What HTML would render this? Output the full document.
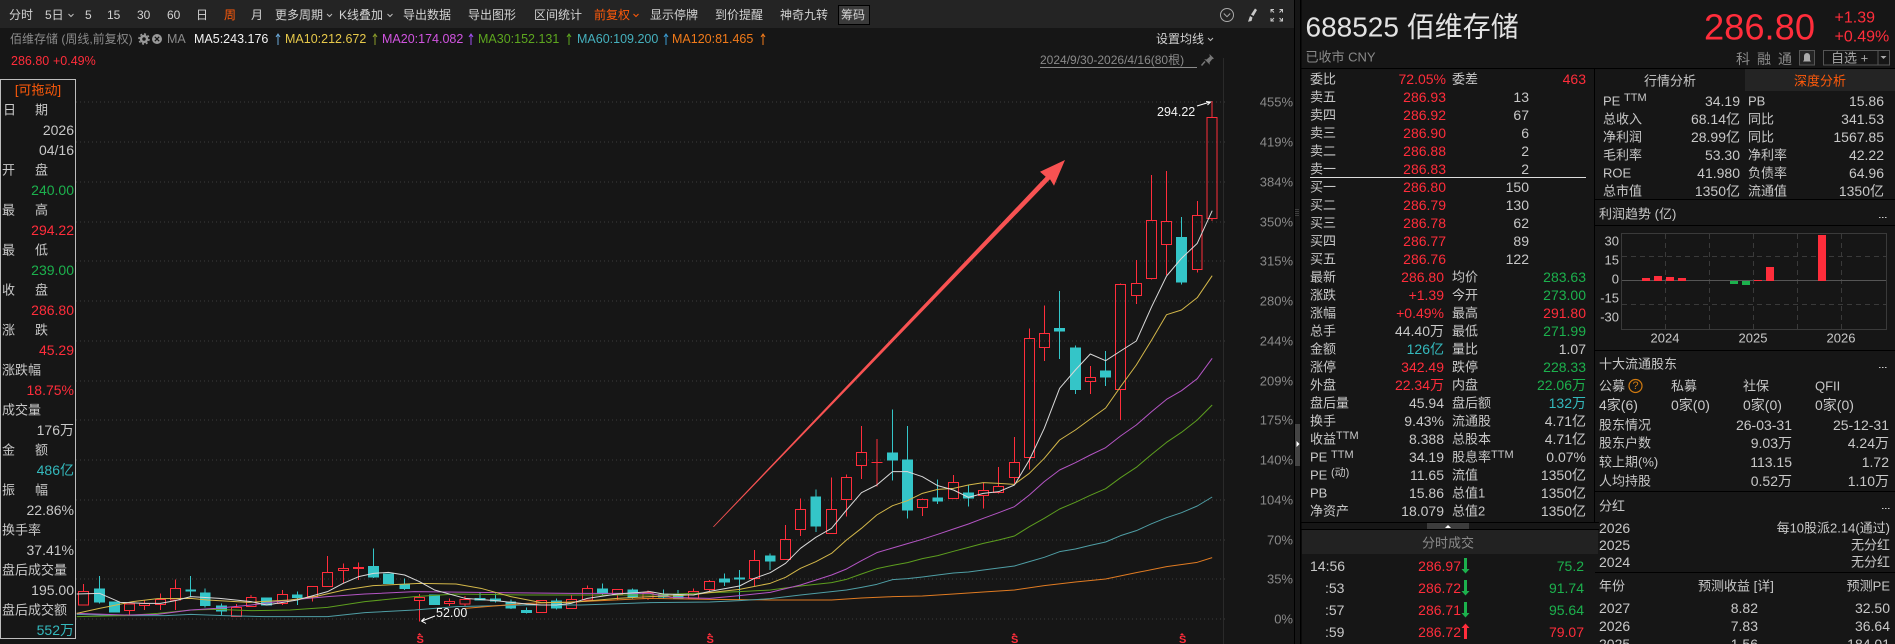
<!DOCTYPE html>
<html lang="zh-CN"><head><meta charset="utf-8"><title>688525 佰维存储</title>
<style>
html,body{margin:0;padding:0;background:#161616;width:1895px;height:644px;overflow:hidden}
svg{display:block;position:absolute;left:0;top:0}
text{font-family:"Liberation Sans","Noto Sans CJK SC",sans-serif;dominant-baseline:central;fill:#c8c8c8;font-size:14px}
.t{font-size:12px;fill:#d2d2d2}
.m{font-size:12.5px}
.l{font-size:13px}
.s{font-size:11px}
.e{text-anchor:end}
.mid{text-anchor:middle}
.r{fill:#ff2d3b}
.g{fill:#1cb14d}
.c{fill:#34b9bd}
.o{fill:#ff5a0a}
.y{fill:#8a8a8a}
.w{fill:#f2f2f2}
.ns *{vector-effect:non-scaling-stroke}
.ma{fill:none;stroke-width:1;stroke-linejoin:round}
.cr{shape-rendering:crispEdges}
</style></head><body>
<svg width="1895" height="644" viewBox="0 0 1895 644" xmlns="http://www.w3.org/2000/svg">
<rect width="1895" height="644" fill="#161616"/>
<!-- toolbar -->
<rect width="1294" height="28" fill="#242424"/>
<rect x="1294" width="1" height="644" fill="#000"/>
<rect x="1300" width="1.5" height="644" fill="#000"/>
<g class="t">
<text class="t" x="9" y="15">分时</text><text class="t" x="45" y="15">5日</text>
<text class="t" x="85" y="15">5</text><text class="t" x="107" y="15">15</text><text class="t" x="137" y="15">30</text><text class="t" x="167" y="15">60</text>
<text class="t" x="196" y="15">日</text><text class="t o" x="224" y="15">周</text><text class="t" x="251" y="15">月</text>
<text class="t" x="275" y="15">更多周期</text><text class="t" x="339" y="15">K线叠加</text><text class="t" x="403" y="15">导出数据</text><text class="t" x="468" y="15">导出图形</text><text class="t" x="534" y="15">区间统计</text>
<text class="t o" x="594" y="15">前复权</text><text class="t" x="650" y="15">显示停牌</text><text class="t" x="715" y="15">到价提醒</text><text class="t" x="780" y="15">神奇九转</text>
</g>
<rect x="838.5" y="5.5" width="31" height="19" fill="#3a3a3a" stroke="#000"/>
<text class="t" x="841" y="15">筹码</text>
<path d="M68.5 14l2.500 2.500 2.500-2.500M327 14l2.500 2.500 2.500-2.500M387.500 14l2.500 2.500 2.500-2.500" fill="none" stroke="#bbb"/>
<path d="M633.500 14l2.500 2.500 2.500-2.500" fill="none" stroke="#ff5a0a"/>
<circle cx="1227" cy="15" r="6.500" fill="none" stroke="#aaa"/><path d="M1223.800 13.500l3.200 3.200 3.200-3.200" fill="none" stroke="#aaa"/>
<path d="M1255 8.500l2 1.500-3.500 6-2.500-1.500zM1250 16l2.500 1.500-1 3.500-3.500.8z" fill="#c8c8c8"/>
<path d="M1271 12.500v-3h3M1279.500 9.500h3v3M1271 18v3h3M1279.500 21h3v-3M1271.500 10l2.500 2.500M1282 10l-2.500 2.500M1271.500 20.500l2.500-2.500M1282 20.500l-2.500-2.500" fill="none" stroke="#c8c8c8"/>
<!-- row 2 -->
<text class="t y" x="10" y="39">佰维存储 (周线,前复权)</text>
<circle cx="144" cy="39" r="3" fill="none" stroke="#999" stroke-width="2.500"/><circle cx="144" cy="39" r="5" fill="none" stroke="#999" stroke-width="1.500" stroke-dasharray="2 1.900"/>
<circle cx="157" cy="39" r="5" fill="#999"/><path d="M154.800 36.800l4.400 4.400M159.200 36.800l-4.400 4.400" stroke="#161616" stroke-width="1.300"/>
<text class="m y" x="167" y="39">MA</text>
<text class="m w" x="194" y="39">MA5:243.176</text>
<text class="m" x="285" y="39" style="fill:#e6c84a">MA10:212.672</text>
<text class="m" x="382" y="39" style="fill:#d154e0">MA20:174.082</text>
<text class="m" x="478" y="39" style="fill:#5da61f">MA30:152.131</text>
<text class="m" x="577" y="39" style="fill:#45b0bd">MA60:109.200</text>
<text class="m" x="672" y="39" style="fill:#f07a1a">MA120:81.465</text>
<g fill="none" stroke-width="1">
<path d="M278 45V34M276 37l2-3 2 3" stroke="#6aa8d8"/><path d="M375 45V34M373 37l2-3 2 3" stroke="#8a9a2a"/><path d="M471 45V34M469 37l2-3 2 3" stroke="#a050f0"/><path d="M569 45V34M567 37l2-3 2 3" stroke="#5da61f"/><path d="M666 45V34M664 37l2-3 2 3" stroke="#3a9ad0"/><path d="M763 45V34M761 37l2-3 2 3" stroke="#f07a1a"/>
</g>
<text class="t" x="1156" y="39">设置均线</text><path d="M1208 38l2.500 2.500 2.500-2.500" fill="none" stroke="#bbb"/>
<text class="m r" x="11" y="61">286.80</text><text class="m r" x="53" y="61">+0.49%</text>
<text class="t y" x="1040" y="60">2024/9/30-2026/4/16(80根)</text>
<rect x="1040" y="67" width="157" height="1" fill="#8a8a8a"/>
<path d="M1209.500 54l4.500 4.500-1.800.7-2.700 3.300.4 2.300-5.700-5.700 2.300.4 3.300-2.700z" fill="#777"/>
<path d="M1205 61.500l-3.500 4" stroke="#777" stroke-width="1.500" fill="none"/>
<!-- grid -->
<g stroke="#3c3c3c" stroke-dasharray="1 3" class="cr">
<path d="M76 102H1226M76 142H1226M76 182H1226M76 222H1226M76 261H1226M76 301H1226M76 341H1226M76 381H1226M76 420H1226M76 460H1226M76 500H1226M76 540H1226M76 579H1226M76 619H1226"/>
</g>
<rect x="1223" y="58" width="1" height="586" fill="#2a2a2a"/>
<g>
<text class="l y e" x="1293" y="102">455%</text><text class="l y e" x="1293" y="142">419%</text><text class="l y e" x="1293" y="182">384%</text><text class="l y e" x="1293" y="222">350%</text><text class="l y e" x="1293" y="261">315%</text><text class="l y e" x="1293" y="301">280%</text><text class="l y e" x="1293" y="341">244%</text><text class="l y e" x="1293" y="381">209%</text><text class="l y e" x="1293" y="420">175%</text><text class="l y e" x="1293" y="460">140%</text><text class="l y e" x="1293" y="500">104%</text><text class="l y e" x="1293" y="540">70%</text><text class="l y e" x="1293" y="579">35%</text><text class="l y e" x="1293" y="619">0%</text>
</g>
<!-- candles, left part -->
<g class="ns" transform="translate(0,220) scale(.41459,.33333)">
<path class="cr" fill="none" stroke="#ff2d3b" d="M201 1092V1114M201 1155V1157M312 1171V1185M348 1140V1150M348 1157V1170M387 1120V1138M387 1153V1170M423 1078V1106M423 1140V1170M570 1152V1163M606 1125V1133M681 1110V1124M681 1150V1155M754 1130V1145M790 1008V1057M828 1030V1045M828 1052V1090M865 1027V1042M865 1046V1080M1012 1122V1133M1012 1142V1205M1084 1135V1144M1084 1151V1158M1122 1128V1138M1122 1152V1160M1378 1125V1139M1417 1096V1105M1489 1122V1140M1563 1112V1118M1563 1135V1140"/>
<path class="cr" fill="none" stroke="#ff2d3b" d="M189 1114h24v41h-24zM300 1152h24v19h-24zM336 1150h24v7h-24zM375 1138h24v15h-24zM411 1106h24v34h-24zM558 1163h24v27h-24zM594 1133h24v27h-24zM669 1124h24v26h-24zM742 1099h24v31h-24zM778 1057h24v43h-24zM816 1045h24v7h-24zM853 1042h24v4h-24zM1000 1133h24v9h-24zM1072 1144h24v7h-24zM1110 1138h24v14h-24zM1294 1142h24v36h-24zM1366 1139h24v27h-24zM1405 1105h24v35h-24zM1477 1108h24v14h-24zM1551 1118h24v17h-24z"/>
<path class="cr" fill="none" stroke="#34c5c8" d="M240 1068V1150M460 1068V1130M495 1105V1162M534 1150V1188M717 1114V1155M901 985V1074M976 1075V1110M1158 1118V1142M1195 1120V1148M1232 1138V1167M1270 1162V1181M1342 1135V1168M1453 1090V1124M1526 1105V1135"/>
<path class="cr" fill="#34c5c8" d="M227 1105h26v43h-26zM263 1145h26v33h-26zM447 1108h26v7h-26zM482 1117h26v41h-26zM521 1157h26v18h-26zM630 1132h26v25h-26zM704 1123h26v11h-26zM888 1038h26v35h-26zM924 1060h26v32h-26zM963 1092h26v15h-26zM1035 1124h26v31h-26zM1145 1134h26v7h-26zM1182 1135h26v10h-26zM1219 1144h26v22h-26zM1257 1170h26v9h-26zM1329 1141h26v25h-26zM1440 1105h26v17h-26zM1513 1108h26v25h-26z"/>
<polyline class="ma" stroke="#4f9ea5" points="185,1183 300,1187 400,1187 460,1183 540,1187 640,1190 790,1190 880,1178 1000,1170 1100,1160 1270,1155 1400,1155 1568,1148"/>
<polyline class="ma" stroke="#5d9e1f" points="185,1190 300,1187 380,1180 460,1170 520,1168 606,1172 700,1170 790,1162 880,1145 1000,1130 1100,1122 1270,1125 1400,1125 1568,1125"/>
<polyline class="ma" stroke="#b455c4" points="185,1180 300,1185 380,1183 460,1170 520,1165 606,1155 700,1140 790,1130 880,1122 1000,1115 1200,1118 1378,1120 1568,1120"/>
<polyline class="ma" stroke="#e07b22" points="1122,1165 1270,1150 1400,1145 1568,1135"/>
<polyline class="ma" stroke="#d4b84a" points="185,1180 240,1165 320,1145 380,1136 460,1135 500,1140 600,1147 700,1140 760,1130 830,1110 900,1097 1012,1090 1100,1092 1160,1105 1232,1130 1306,1148 1378,1147 1489,1135 1568,1130"/>
<polyline class="ma" stroke="#d9d9d9" points="185,1122 240,1120 290,1147 348,1150 387,1150 423,1142 460,1130 530,1135 606,1145 643,1155 717,1140 790,1115 828,1090 865,1070 901,1060 937,1057 976,1065 1012,1085 1048,1110 1122,1135 1195,1142 1270,1152 1306,1155 1342,1155 1378,1150 1417,1135 1489,1122 1568,1115"/>
</g>
<!-- candles, right part -->
<g class="ns" transform="translate(650,220) scale(.41459,.33333)">
<path class="cr" fill="none" stroke="#ff2d3b" d="M105 1105V1114M144 1080V1084M144 1108V1115M252 990V1021M252 1075V1100M327 915V959M327 1018V1020M363 835V868M363 928V948M438 772V868M438 940V942M474 763V772M474 838V890M510 618V697M510 736V777M547 657V800M657 835V838M657 862V888M732 765V788M732 835V837M804 788V811M804 826V866M841 741V799M841 818V820M879 651V727M879 773V790M915 325V355M915 712V748M951 256V341M951 382V423M1062 438V472M1062 484V522M1135 190V193M1135 508V600M1173 120V191M1173 226V252M1210 -135V1M1210 175V178M1246 -147V4M1246 73V165M1320 -57V-14M1320 148V158M1356 -357V-308M1356 -5V3"/>
<path class="cr" fill="none" stroke="#ff2d3b" d="M93 1114h24v21h-24zM132 1084h24v24h-24zM240 1021h24v54h-24zM315 959h24v59h-24zM351 868h24v60h-24zM426 868h24v72h-24zM462 772h24v66h-24zM498 697h24v39h-24zM535 727h24v1h-24zM645 838h24v24h-24zM720 788h24v47h-24zM792 811h24v15h-24zM829 799h24v19h-24zM867 727h24v46h-24zM903 355h24v357h-24zM939 341h24v41h-24zM1050 472h24v12h-24zM1123 193h24v315h-24zM1161 191h24v35h-24zM1198 1h24v174h-24zM1234 4h24v69h-24zM1308 -14h24v162h-24zM1344 -308h24v303h-24z"/>
<path class="cr" fill="none" stroke="#34c5c8" d="M32 1108V1135M68 1110V1135M180 1060V1098M216 1050V1140M290 1000V1050M400 808V936M585 568V782M621 618V896M694 778V852M768 795V860M988 213V417M1026 376V522M1099 393V498M1282 -9V194"/>
<path class="cr" fill="#34c5c8" d="M19 1122h26v10h-26zM55 1124h26v11h-26zM167 1075h26v13h-26zM203 1072h26v7h-26zM277 1006h26v19h-26zM387 829h26v91h-26zM572 697h26v25h-26zM608 718h26v154h-26zM681 832h26v13h-26zM755 817h26v19h-26zM975 324h26v11h-26zM1013 382h26v128h-26zM1086 451h26v22h-26zM1269 51h26v137h-26z"/>
<polyline class="ma" stroke="#e07b22" points="0,1135 144,1138 290,1140 438,1140 510,1134 585,1130 657,1128 732,1122 804,1116 879,1110 951,1097 1026,1086 1099,1077 1173,1058 1246,1040 1320,1027 1356,1013"/>
<polyline class="ma" stroke="#4f9ea5" points="0,1148 144,1146 216,1142 290,1136 363,1125 438,1115 474,1110 510,1102 547,1093 585,1079 621,1076 657,1071 694,1065 732,1059 768,1056 804,1050 841,1044 879,1038 915,1025 951,1012 988,995 1026,987 1062,976 1099,966 1135,947 1173,932 1210,911 1246,893 1282,878 1320,858 1356,831"/>
<polyline class="ma" stroke="#5d9e1f" points="0,1125 100,1120 216,1115 290,1110 363,1098 438,1088 474,1078 510,1062 547,1046 585,1036 621,1028 657,1016 694,1007 732,994 768,982 804,970 841,960 879,948 915,920 951,895 988,867 1026,847 1062,826 1099,806 1135,773 1173,742 1210,703 1246,667 1282,637 1320,600 1356,555"/>
<polyline class="ma" stroke="#b455c4" points="0,1120 50,1132 144,1135 216,1127 290,1117 363,1095 438,1065 474,1047 510,1022 547,998 585,984 621,971 657,958 694,943 732,927 768,912 804,895 841,878 879,860 915,825 951,785 988,750 1026,728 1062,705 1099,683 1135,648 1173,615 1210,575 1246,538 1282,512 1320,476 1356,415"/>
<polyline class="ma" stroke="#d4b84a" points="0,1130 68,1127 105,1124 144,1118 216,1108 290,1090 327,1072 363,1045 400,1025 438,1000 474,960 510,925 547,885 585,857 621,842 657,820 694,808 732,805 768,795 804,788 841,790 879,793 915,760 951,715 988,660 1026,630 1062,597 1099,564 1135,500 1173,435 1210,360 1246,284 1282,270 1320,233 1356,167"/>
<polyline class="ma" stroke="#d9d9d9" points="0,1115 32,1122 105,1125 144,1114 216,1098 252,1075 290,1058 327,1030 363,985 400,952 438,925 474,870 510,818 547,795 585,755 621,755 657,770 694,797 732,810 768,832 804,820 841,815 879,795 915,720 951,625 988,505 1026,450 1062,402 1099,422 1135,393 1173,363 1210,260 1246,168 1282,115 1320,70 1356,-28"/>
</g>
<!-- annotations -->
<polygon points="713,526.700 1045.700,176.700 1040,171.700 1065,160 1054,185.700 1050,179.300 713.800,527" fill="#f85252"/>
<text class="m w" x="1157" y="112">294.22</text>
<path d="M1197 106l13-4M1206 101.500l4.500.5-3 3" fill="none" stroke="#fff"/>
<text class="m w" x="436" y="613">52.00</text>
<path d="M435 616l-13 5M426 623.500l-4.500-2.500 3-3" fill="none" stroke="#fff"/>
<g>
<text class="s r" x="416.500" y="640" style="font-weight:bold">S</text><text class="s r" x="706.500" y="640" style="font-weight:bold">S</text><text class="s r" x="1011" y="640" style="font-weight:bold">S</text><text class="s r" x="1179" y="640" style="font-weight:bold">S</text>
<path d="M417.500 635l2-2 2 2zM707.500 635l2-2 2 2zM1012 635l2-2 2 2zM1180 635l2-2 2 2z" fill="#ff2d3b"/>
</g>
<!-- info box -->
<rect x=".5" y="79.500" width="75" height="559" fill="#161616" stroke="#bdbdbd"/>
<g>
<text class="l o mid" x="38" y="90">[可拖动]</text>
<text class="l" x="3" y="110">日</text><text class="l" x="35" y="110">期</text>
<text class="e" x="74" y="130">2026</text><text class="e" x="74" y="150">04/16</text>
<text class="l" x="2" y="170">开</text><text class="l" x="35" y="170">盘</text>
<text class="e g" x="74" y="190">240.00</text>
<text class="l" x="2" y="210">最</text><text class="l" x="35" y="210">高</text>
<text class="e r" x="74" y="230">294.22</text>
<text class="l" x="2" y="250">最</text><text class="l" x="35" y="250">低</text>
<text class="e g" x="74" y="270">239.00</text>
<text class="l" x="2" y="290">收</text><text class="l" x="35" y="290">盘</text>
<text class="e r" x="74" y="310">286.80</text>
<text class="l" x="2" y="330">涨</text><text class="l" x="35" y="330">跌</text>
<text class="e r" x="74" y="350">45.29</text>
<text class="l" x="2" y="370">涨跌幅</text>
<text class="e r" x="74" y="390">18.75%</text>
<text class="l" x="2" y="410">成交量</text>
<text class="e" x="74" y="430">176万</text>
<text class="l" x="2" y="450">金</text><text class="l" x="35" y="450">额</text>
<text class="e c" x="74" y="470">486亿</text>
<text class="l" x="2" y="490">振</text><text class="l" x="35" y="490">幅</text>
<text class="e" x="74" y="510">22.86%</text>
<text class="l" x="2" y="530">换手率</text>
<text class="e" x="74" y="550">37.41%</text>
<text class="l" x="2" y="570">盘后成交量</text>
<text class="e" x="74" y="590">195.00</text>
<text class="l" x="2" y="610">盘后成交额</text>
<text class="e c" x="74" y="630">552万</text>
</g>
<!-- splitter handle -->
<rect x="1295" y="424" width="5" height="42" fill="#444"/>
<path d="M1296.500 441l3 3-3 3z" fill="#fff"/>
<path d="M1296 209v8M1298 209v8" stroke="#666" stroke-dasharray="1 1"/>
<!-- header -->
<text x="1305.500" y="27" style="font-size:28px;fill:#e2e2e2">688525 佰维存储</text>
<text class="l y" x="1305.500" y="57">已收市 CNY</text>
<text class="r" x="1704" y="27" style="font-size:36.300px">286.80</text>
<text class="r" x="1834.500" y="18" style="font-size:16px">+1.39</text>
<text class="r" x="1834.500" y="37" style="font-size:16px">+0.49%</text>
<text class="y" x="1736" y="59">科</text><text class="y" x="1757" y="59">融</text><text class="y" x="1778" y="59">通</text>
<rect x="1799.500" y="50.500" width="15" height="14.500" fill="#242424" stroke="#555"/>
<path d="M1807 53a3 3 0 0 1 3 3v4l1 1.500h-8l1-1.500v-4a3 3 0 0 1 3-3z" fill="#aaa"/>
<rect x="1823.500" y="50.500" width="66" height="14.500" fill="none" stroke="#555"/>
<rect x="1877.500" y="51" width="1" height="14" fill="#555"/>
<text class="l" x="1831" y="58" style="fill:#aaa">自选 +</text>
<path d="M1880.500 56h6l-3 3z" fill="#aaa"/>
<rect x="1301" y="68" width="594" height="1" fill="#000"/>
<rect x="1594" y="69" width="1" height="453" fill="#000"/>
<!-- order book -->
<g>
<text class="l" x="1310" y="79">委比</text><text class="e r" x="1446" y="79">72.05%</text><text class="l" x="1452" y="79">委差</text><text class="e r" x="1586" y="79">463</text>
<text class="l" x="1310" y="97">卖五</text><text class="e r" x="1446" y="97">286.93</text><text class="e" x="1529" y="97">13</text>
<text class="l" x="1310" y="115">卖四</text><text class="e r" x="1446" y="115">286.92</text><text class="e" x="1529" y="115">67</text>
<text class="l" x="1310" y="133">卖三</text><text class="e r" x="1446" y="133">286.90</text><text class="e" x="1529" y="133">6</text>
<text class="l" x="1310" y="151">卖二</text><text class="e r" x="1446" y="151">286.88</text><text class="e" x="1529" y="151">2</text>
<text class="l" x="1310" y="169">卖一</text><text class="e r" x="1446" y="169">286.83</text><text class="e" x="1529" y="169">2</text>
<rect x="1310" y="177" width="276" height="1" fill="#ddd"/>
<text class="l" x="1310" y="187">买一</text><text class="e r" x="1446" y="187">286.80</text><text class="e" x="1529" y="187">150</text>
<text class="l" x="1310" y="205">买二</text><text class="e r" x="1446" y="205">286.79</text><text class="e" x="1529" y="205">130</text>
<text class="l" x="1310" y="223">买三</text><text class="e r" x="1446" y="223">286.78</text><text class="e" x="1529" y="223">62</text>
<text class="l" x="1310" y="241">买四</text><text class="e r" x="1446" y="241">286.77</text><text class="e" x="1529" y="241">89</text>
<text class="l" x="1310" y="259">买五</text><text class="e r" x="1446" y="259">286.76</text><text class="e" x="1529" y="259">122</text>
<text class="l" x="1310" y="277">最新</text><text class="e r" x="1444" y="277">286.80</text><text class="l" x="1452" y="277">均价</text><text class="e g" x="1586" y="277">283.63</text>
<text class="l" x="1310" y="295">涨跌</text><text class="e r" x="1444" y="295">+1.39</text><text class="l" x="1452" y="295">今开</text><text class="e g" x="1586" y="295">273.00</text>
<text class="l" x="1310" y="313">涨幅</text><text class="e r" x="1444" y="313">+0.49%</text><text class="l" x="1452" y="313">最高</text><text class="e r" x="1586" y="313">291.80</text>
<text class="l" x="1310" y="331">总手</text><text class="e" x="1444" y="331">44.40万</text><text class="l" x="1452" y="331">最低</text><text class="e g" x="1586" y="331">271.99</text>
<text class="l" x="1310" y="349">金额</text><text class="e c" x="1444" y="349">126亿</text><text class="l" x="1452" y="349">量比</text><text class="e" x="1586" y="349">1.07</text>
<text class="l" x="1310" y="367">涨停</text><text class="e r" x="1444" y="367">342.49</text><text class="l" x="1452" y="367">跌停</text><text class="e g" x="1586" y="367">228.33</text>
<text class="l" x="1310" y="385">外盘</text><text class="e r" x="1444" y="385">22.34万</text><text class="l" x="1452" y="385">内盘</text><text class="e g" x="1586" y="385">22.06万</text>
<text class="l" x="1310" y="403">盘后量</text><text class="e" x="1444" y="403">45.94</text><text class="l" x="1452" y="403">盘后额</text><text class="e c" x="1586" y="403">132万</text>
<text class="l" x="1310" y="421">换手</text><text class="e" x="1444" y="421">9.43%</text><text class="l" x="1452" y="421">流通股</text><text class="e" x="1586" y="421">4.71亿</text>
<text class="l" x="1310" y="439">收益</text><text class="s" x="1336" y="436">TTM</text><text class="e" x="1444" y="439">8.388</text><text class="l" x="1452" y="439">总股本</text><text class="e" x="1586" y="439">4.71亿</text>
<text class="l" x="1310" y="457">PE</text><text class="s" x="1331" y="455">TTM</text><text class="e" x="1444" y="457">34.19</text><text class="l" x="1452" y="457">股息率</text><text class="s" x="1491" y="455">TTM</text><text class="e" x="1586" y="457">0.07%</text>
<text class="l" x="1310" y="475">PE</text><text class="s" x="1331" y="473">(动)</text><text class="e" x="1444" y="475">11.65</text><text class="l" x="1452" y="475">流值</text><text class="e" x="1586" y="475">1350亿</text>
<text class="l" x="1310" y="493">PB</text><text class="e" x="1444" y="493">15.86</text><text class="l" x="1452" y="493">总值1</text><text class="e" x="1586" y="493">1350亿</text>
<text class="l" x="1310" y="511">净资产</text><text class="e" x="1444" y="511">18.079</text><text class="l" x="1452" y="511">总值2</text><text class="e" x="1586" y="511">1350亿</text>
</g>
<rect x="1301" y="522" width="298" height="1" fill="#000"/>
<rect x="1427" y="523" width="42" height="6" fill="#3c3c3c"/>
<path d="M1445 528l3-3 3 3z" fill="#fff"/>
<rect x="1301" y="529" width="298" height="1" fill="#000"/>
<rect x="1302" y="530" width="296" height="24" fill="#222"/>
<text class="l y mid" x="1448" y="543">分时成交</text>
<text x="1310" y="566">14:56</text><text class="e r" x="1461" y="566">286.97</text><text class="e g" x="1584" y="566">75.2</text>
<text x="1325" y="588">:53</text><text class="e r" x="1461" y="588">286.72</text><text class="e g" x="1584" y="588">91.74</text>
<text x="1325" y="610">:57</text><text class="e r" x="1461" y="610">286.71</text><text class="e g" x="1584" y="610">95.64</text>
<text x="1325" y="632">:59</text><text class="e r" x="1461" y="632">286.72</text><text class="e r" x="1584" y="632">79.07</text>
<path d="M1464 558h3v11h2.500l-4 4.500-4-4.500h2.500zM1464 580h3v11h2.500l-4 4.500-4-4.500h2.500zM1464 602h3v11h2.500l-4 4.500-4-4.500h2.500z" fill="#1cb14d"/>
<path d="M1464 639v-11h-2.500l4-4.500 4 4.500h-2.500v11z" fill="#ff2d3b"/>
<!-- right column -->
<rect x="1745" y="69" width="150" height="22" fill="#242424"/>
<text class="l mid" x="1670" y="81">行情分析</text><text class="l o mid" x="1820" y="81">深度分析</text>
<g>
<text class="l" x="1603" y="101">PE</text><text class="s" x="1624" y="98">TTM</text><text class="e" x="1740" y="101">34.19</text><text class="l" x="1748" y="101">PB</text><text class="e" x="1884" y="101">15.86</text>
<text class="l" x="1603" y="119">总收入</text><text class="e" x="1740" y="119">68.14亿</text><text class="l" x="1748" y="119">同比</text><text class="e" x="1884" y="119">341.53</text>
<text class="l" x="1603" y="137">净利润</text><text class="e" x="1740" y="137">28.99亿</text><text class="l" x="1748" y="137">同比</text><text class="e" x="1884" y="137">1567.85</text>
<text class="l" x="1603" y="155">毛利率</text><text class="e" x="1740" y="155">53.30</text><text class="l" x="1748" y="155">净利率</text><text class="e" x="1884" y="155">42.22</text>
<text class="l" x="1603" y="173">ROE</text><text class="e" x="1740" y="173">41.980</text><text class="l" x="1748" y="173">负债率</text><text class="e" x="1884" y="173">64.96</text>
<text class="l" x="1603" y="191">总市值</text><text class="e" x="1740" y="191">1350亿</text><text class="l" x="1748" y="191">流通值</text><text class="e" x="1884" y="191">1350亿</text>
</g>
<rect x="1594" y="199" width="301" height="1" fill="#000"/>
<text class="l" x="1599" y="214">利润趋势 (亿)</text>
<path d="M1879 217.500h1.500M1882 217.500h1.500M1885 217.500h1.500" stroke="#ccc"/>
<rect x="1595" y="225" width="300" height="1" fill="#000"/>
<!-- profit chart -->
<g class="cr">
<rect x="1621.500" y="233.500" width="265" height="96" fill="none" stroke="#3a3a3a"/>
<path d="M1622 256.500H1886M1622 304.500H1886M1665.500 234V329M1709.500 234V329M1753.500 234V329M1797.500 234V329M1841.500 234V329" stroke="#3a3a3a" stroke-dasharray="5 4" fill="none"/>
<path d="M1622 280.500H1886" stroke="#555"/>
<path d="M1642 278h8v3h-8zM1654 276h8v5h-8zM1666 277h8v4h-8zM1678 278h8v3h-8zM1754 280h8v1h-8zM1766 267h8v14h-8zM1818 235h8v46h-8z" fill="#ff2d3b"/>
<path d="M1730 281h8v3h-8zM1742 281h8v4h-8z" fill="#1cb14d"/>
</g>
<g>
<text class="l e" x="1619" y="241">30</text><text class="l e" x="1619" y="260">15</text><text class="l e" x="1619" y="279">0</text><text class="l e" x="1619" y="298">-15</text><text class="l e" x="1619" y="317">-30</text>
<text class="l mid" x="1665" y="338">2024</text><text class="l mid" x="1753" y="338">2025</text><text class="l mid" x="1841" y="338">2026</text>
</g>
<rect x="1595" y="350" width="300" height="1" fill="#000"/>
<text class="l" x="1599" y="364">十大流通股东</text>
<path d="M1879 367.500h1.500M1882 367.500h1.500M1885 367.500h1.500" stroke="#ccc"/>
<text class="l" x="1599" y="386">公募</text>
<circle cx="1635.500" cy="386" r="6.500" fill="none" stroke="#d07a10" stroke-width="1.200"/><text class="s mid" x="1635.500" y="386" style="fill:#d07a10">?</text>
<text class="l" x="1671" y="386">私募</text><text class="l" x="1743" y="386">社保</text><text class="l" x="1815" y="386">QFII</text>
<text x="1599" y="405">4家(6)</text><text x="1671" y="405">0家(0)</text><text x="1743" y="405">0家(0)</text><text x="1815" y="405">0家(0)</text>
<text class="l" x="1599" y="425">股东情况</text><text class="e" x="1792" y="425">26-03-31</text><text class="e" x="1889" y="425">25-12-31</text>
<text class="l" x="1599" y="443">股东户数</text><text class="e" x="1792" y="443">9.03万</text><text class="e" x="1889" y="443">4.24万</text>
<text class="l" x="1599" y="462">较上期(%)</text><text class="e" x="1792" y="462">113.15</text><text class="e" x="1889" y="462">1.72</text>
<text class="l" x="1599" y="481">人均持股</text><text class="e" x="1792" y="481">0.52万</text><text class="e" x="1889" y="481">1.10万</text>
<rect x="1595" y="491" width="300" height="1" fill="#000"/>
<text class="l" x="1599" y="506">分红</text>
<path d="M1882 508.500h1.500M1885 508.500h1.500M1888 508.500h1.500" stroke="#ccc"/>
<text x="1599" y="528">2026</text><text class="l e" x="1890" y="528">每10股派2.14(通过)</text>
<text x="1599" y="545">2025</text><text class="l e" x="1890" y="545">无分红</text>
<text x="1599" y="562">2024</text><text class="l e" x="1890" y="562">无分红</text>
<rect x="1595" y="572" width="300" height="1" fill="#000"/>
<text class="l" x="1599" y="586">年份</text><text class="l" x="1698" y="586">预测收益 [详]</text><text class="l e" x="1890" y="586">预测PE</text>
<text x="1599" y="608">2027</text><text class="e" x="1758" y="608">8.82</text><text class="e" x="1890" y="608">32.50</text>
<text x="1599" y="626">2026</text><text class="e" x="1758" y="626">7.83</text><text class="e" x="1890" y="626">36.64</text>
<text x="1599" y="644">2025</text><text class="e" x="1758" y="644">1.56</text><text class="e" x="1890" y="644">184.01</text>
</svg>
</body></html>
